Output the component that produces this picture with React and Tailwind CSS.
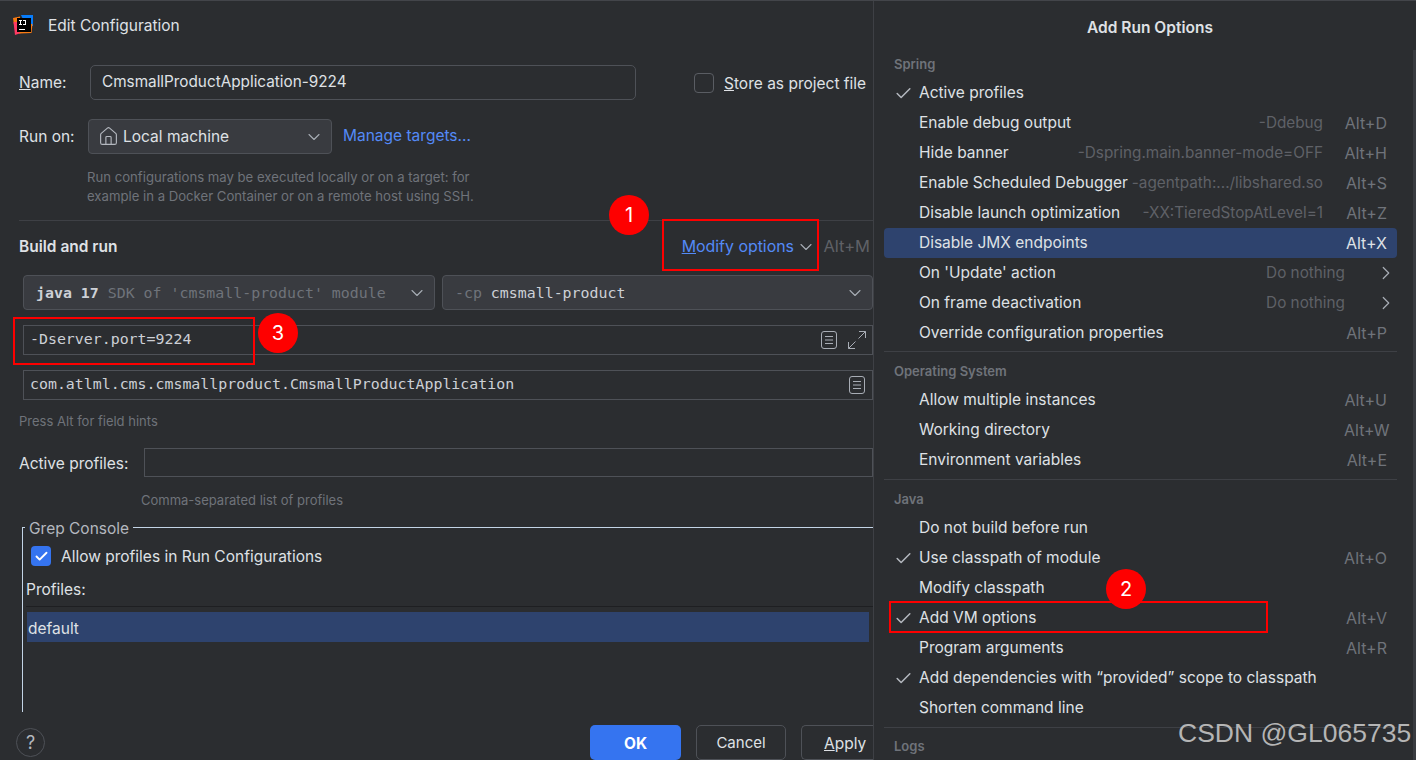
import { Check, ChevronDown, ChevronRight, House } from 'lucide-react'

const UI = "font-['Inter',sans-serif]"
const MONO = "font-['DejaVu_Sans_Mono','Liberation_Mono',monospace]"

const sections = [
  {
    title: 'Spring',
    gap: '',
    items: [
      { label: 'Active profiles', checked: true },
      { label: 'Enable debug output', hint: '-Ddebug', key: 'Alt+D' },
      { label: 'Hide banner', hint: '-Dspring.main.banner-mode=OFF', key: 'Alt+H' },
      { label: 'Enable Scheduled Debugger', hint: '-agentpath:.../libshared.so', key: 'Alt+S' },
      { label: 'Disable launch optimization', hint: '-XX:TieredStopAtLevel=1', key: 'Alt+Z' },
      { label: 'Disable JMX endpoints', key: 'Alt+X', selected: true },
      { label: "On 'Update' action", hint: 'Do nothing', sub: true },
      { label: 'On frame deactivation', hint: 'Do nothing', sub: true },
      { label: 'Override configuration properties', key: 'Alt+P' },
    ],
  },
  {
    title: 'Operating System',
    gap: 'mt-[3px] border-t border-[#3e4045] pt-[10px]',
    items: [
      { label: 'Allow multiple instances', key: 'Alt+U' },
      { label: 'Working directory', key: 'Alt+W' },
      { label: 'Environment variables', key: 'Alt+E' },
    ],
  },
  {
    title: 'Java',
    gap: 'mt-[4px] border-t border-[#3e4045] pt-[10px]',
    items: [
      { label: 'Do not build before run' },
      { label: 'Use classpath of module', checked: true, key: 'Alt+O' },
      { label: 'Modify classpath' },
      { label: 'Add VM options', checked: true, key: 'Alt+V' },
      { label: 'Program arguments', key: 'Alt+R' },
      { label: 'Add dependencies with “provided” scope to classpath', checked: true },
      { label: 'Shorten command line' },
    ],
  },
]

const AppLogo = () => (
  <svg width="20" height="20" viewBox="0 0 20 20" className="shrink-0">
    <path d="M8 0 H20 V11 L13 11 Z" fill="#087cfa" />
    <path d="M0 3 L7 1.5 L7 9 L1 10 Z" fill="#f97a12" />
    <path d="M0.5 7 L8 7 L8 18 L2 20 Z" fill="#ff3a63" />
    <path d="M10 9 H19.5 L18.5 18 L6 18.5 Z" fill="#f97a12" />
    <rect x="4" y="3" width="14" height="14" fill="#000" />
    <rect x="6" y="5" width="3" height="1" fill="#fff" />
    <rect x="7" y="5" width="1" height="5" fill="#fff" />
    <rect x="6" y="9" width="3" height="1" fill="#fff" />
    <rect x="10" y="5" width="3" height="1" fill="#fff" />
    <rect x="12" y="5" width="1" height="5" fill="#fff" />
    <rect x="10" y="9" width="2.5" height="1" fill="#fff" />
    <rect x="6" y="14" width="6" height="1" fill="#fff" />
  </svg>
)

const NotesIcon = () => (
  <svg width="16" height="18" viewBox="0 0 16 18" fill="none" stroke="#a8adb5" strokeWidth="1" className="shrink-0">
    <rect x="0.5" y="0.5" width="15" height="17" rx="2.5" />
    <path d="M4 5.5h8M4 9h8M4 12.5h8" />
  </svg>
)

const ExpandIcon = () => (
  <svg width="18" height="18" viewBox="0 0 18 18" fill="none" stroke="#a8adb5" strokeWidth="1" className="shrink-0">
    <path d="M10.5 7.5 L17.5 0.5 M11 0.5 H17.5 V7" />
    <path d="M7.5 10.5 L0.5 17.5 M0.5 11 V17.5 H7" />
  </svg>
)

const Select = ({ className, children }) => (
  <div className={`flex items-center justify-between rounded-[4px] border border-[#4e5157] bg-[#393b40] pr-[7px] ${className}`}>
    {children}
    <ChevronDown size={20} strokeWidth={1.3} className="shrink-0 text-[#a8adb5]" />
  </div>
)

const Badge = ({ className, children }) => (
  <div className={`absolute flex size-[40px] items-center justify-center rounded-full bg-[#fe0000] text-[20px] text-white ${className}`}>
    {children}
  </div>
)

const MenuRow = ({ item }) => (
  <div className={`flex h-[30px] items-center rounded-[4px] pr-[10px] ${item.selected ? 'bg-[#2e436e]' : ''}`}>
    <div className="flex w-[35px] shrink-0 justify-end pr-[6px]">
      {item.checked && <Check size={19} strokeWidth={1.9} className="text-[#b4b8bf]" />}
    </div>
    <span className="flex-1 whitespace-nowrap text-[#dfe1e5]">{item.label}</span>
    {item.hint && <span className="whitespace-nowrap text-[15.3px] text-[#5f6167]">{item.hint}</span>}
    {item.key && (
      <span className={`ml-[21px] w-[43px] whitespace-nowrap pb-[1px] text-right text-[16px] ${item.selected ? 'text-[#dfe1e5]' : 'text-[#6f737a]'}`}>
        {item.key}
      </span>
    )}
    {item.sub && (
      <div className="ml-[32px] flex w-[10px] justify-end">
        <ChevronRight size={22} strokeWidth={1.3} className="-mr-[10px] shrink-0 text-[#a8adb5]" />
      </div>
    )}
  </div>
)

const App = () => {
  return (
    <div className={`relative flex h-[760px] w-[1416px] overflow-hidden border-t border-[#43454a] bg-[#2b2d30] text-[15.5px] text-[#dfe1e5] ${UI}`}>
      {/* left: the run configuration dialog */}
      <div className="flex w-[873px] shrink-0 flex-col">
        <div className="flex h-[50px] items-center pb-[1px] pl-[13px]">
          <div className="mb-[1px]"><AppLogo /></div>
          <span className="ml-[15px]">Edit Configuration</span>
        </div>

        <div className="mt-[14px] flex h-[35px] items-center pl-[19px]">
          <span className="w-[71px] pt-[1px]"><u>N</u>ame:</span>
          <div className="flex h-full w-[546px] items-center rounded-[5px] border border-[#4e5157] px-[11px] text-[15.3px]">
            CmsmallProductApplication-9224
          </div>
          <div className="ml-[58px] size-[20px] rounded-[4px] border border-[#5a5d63]" />
          <span className="ml-[10px] whitespace-nowrap pt-[2px]"><u>S</u>tore as project file</span>
        </div>

        <div className="mt-[19px] flex h-[35px] items-center pl-[19px]">
          <span className="w-[69px]">Run on:</span>
          <Select className="h-full w-[244px] pl-[9px]">
            <span className="flex items-center gap-[4px]">
              <House size={21} strokeWidth={1.3} className="text-[#b4b8bf]" />
              <span>Local machine</span>
            </span>
          </Select>
          <span className="ml-[11px] pb-[2px] text-[#548af7]">Manage targets...</span>
        </div>

        <div className="mt-[14px] pl-[87px] text-[13.15px] leading-[19px] text-[#6f737a]">
          <p>Run configurations may be executed locally or on a target: for</p>
          <p>example in a Docker Container or on a remote host using SSH.</p>
        </div>

        <div className="mt-[14px] ml-[19px] border-t border-[#3e4045]" />

        <div className="flex h-[54px] items-center pb-[3px] pl-[19px] pr-[3px]">
          <span className="flex-1 font-semibold">Build and run</span>
          <span className="text-[15.9px] text-[#548af7]"><u>M</u>odify options</span>
          <ChevronDown size={20} strokeWidth={1.3} className="ml-[2px] text-[#a8adb5]" />
          <span className="ml-[7px] w-[47px] whitespace-nowrap text-right text-[16.5px] text-[#5f6167]">Alt+M</span>
        </div>

        <div className={`flex h-[35px] gap-[7px] pl-[23px] text-[14.9px] text-[#cdd0d6] ${MONO}`}>
          <Select className="w-[412px] pl-[12px]">
            <span className="whitespace-nowrap pt-[1px]">
              <b className="font-bold">java 17</b> <span className="text-[#6f737a]">SDK of 'cmsmall-product' module</span>
            </span>
          </Select>
          <Select className="w-[431px] pl-[12px]">
            <span className="whitespace-nowrap pt-[1px]">
              <span className="text-[#6f737a]">-cp</span> cmsmall-product
            </span>
          </Select>
        </div>

        <div className={`mt-[15px] ml-[23px] flex h-[30px] items-center gap-[11px] border border-[#4e5157] pl-[6px] pr-[6px] text-[14.9px] text-[#cdd0d6] ${MONO}`}>
          <span className="flex-1 pb-[2px]">-Dserver.port=9224</span>
          <NotesIcon />
          <ExpandIcon />
        </div>

        <div className={`mt-[15px] ml-[23px] flex h-[30px] items-center border border-[#4e5157] pl-[6px] pr-[7px] text-[14.9px] text-[#cdd0d6] ${MONO}`}>
          <span className="flex-1 pb-[2px]">com.atlml.cms.cmsmallproduct.CmsmallProductApplication</span>
          <NotesIcon />
        </div>

        <p className="mt-[12px] pl-[19px] text-[13px] leading-[18px] text-[#6f737a]">Press Alt for field hints</p>

        <div className="mt-[18px] flex h-[29px] items-center pl-[19px]">
          <span className="w-[125px] pt-[2px]">Active profiles:</span>
          <div className="h-full flex-1 border border-[#4e5157]" />
        </div>

        <p className="mt-[14px] pl-[141px] text-[13px] leading-[18px] text-[#6f737a]">Comma-separated list of profiles</p>

        {/* Grep Console group */}
        <div className="relative ml-[22px] mt-[18px] h-[185px] border-l border-t border-[#c3d4e6] pl-[3px]">
          <span className="absolute -top-[9px] left-[2px] bg-[#2b2d30] px-[4px] leading-[20px] text-[#b4b8bf]">Grep Console</span>
          <div className="mt-[18px] flex h-[20px] items-center pl-[5px]">
            <div className="flex size-[20px] items-center justify-center rounded-[4px] bg-[#3574f0]">
              <Check size={15} strokeWidth={3} className="text-white" />
            </div>
            <span className="ml-[10px] pt-[2px]">Allow profiles in Run Configurations</span>
          </div>
          <p className="mt-[14px] leading-[20px]">Profiles:</p>
          <div className="mt-[6px] border-t border-[#1e1f22] pr-[4px] pt-[5px]">
            <div className="ml-[1px] flex h-[30px] items-center bg-[#2e436e] pl-[1px] pt-[3px]">default</div>
          </div>
        </div>

        <div className="mt-auto flex h-[36px] items-end pl-[16px]">
          <div className="mb-[3px] flex size-[29px] items-center justify-center rounded-full border border-[#4e5157] text-[18px] text-[#b4b8bf]">?</div>
          <div className="ml-auto flex h-[35px] gap-[15px]">
            <div className="flex w-[91px] items-center justify-center rounded-[5px] bg-[#3574f0] pt-[2px] font-bold text-white">OK</div>
            <div className="flex w-[90px] items-center justify-center rounded-[5px] border border-[#4e5157] pt-[2px] text-[15px]">Cancel</div>
            <div className="flex w-[72px] items-center rounded-l-[5px] border-y border-l border-[#4e5157] pl-[22px] pt-[2px]"><u>A</u>pply</div>
          </div>
        </div>
      </div>

      {/* right: the Add Run Options popup */}
      <div className="relative flex flex-1 flex-col border-l border-[#3e4045]">
        <div className="flex h-[54px] items-center justify-center pl-[10px] font-semibold">Add Run Options</div>
        <div className="absolute right-0 top-[49px] h-[710px] w-[3px] bg-[#393b40]" />
        <div className="pl-[10px] pr-[19px]">
          {sections.map((section) => (
            <div key={section.title} className={section.gap}>
              <div className="flex h-[20px] items-center pl-[10px] text-[13px] font-semibold text-[#6f737a]">{section.title}</div>
              <div className="mt-[3px]">
                {section.items.map((item) => (
                  <MenuRow key={item.label} item={item} />
                ))}
              </div>
            </div>
          ))}
          <div className="mt-[4px] border-t border-[#3e4045] pl-[10px] pt-[9px] text-[13px] font-semibold text-[#6f737a]">Logs</div>
        </div>
      </div>

      {/* annotations drawn on the screenshot */}
      <div className="absolute left-[662px] top-[218px] h-[52px] w-[157px] border-2 border-[#fe0000]" />
      <Badge className="left-[609px] top-[194px]">1</Badge>
      <div className="absolute left-[13px] top-[316px] h-[48px] w-[242px] border-2 border-[#fe0000]" />
      <Badge className="left-[258px] top-[312px]">3</Badge>
      <div className="absolute left-[889px] top-[600px] h-[32px] w-[379px] border-2 border-[#fe0000]" />
      <Badge className="left-[1106px] top-[568px]">2</Badge>
      <div className="absolute left-[1178px] top-[715px] whitespace-nowrap font-['Liberation_Sans',sans-serif] text-[26.5px] leading-[34px] text-[#b5b5b5]">CSDN @GL065735</div>
    </div>
  )
}

export default App
